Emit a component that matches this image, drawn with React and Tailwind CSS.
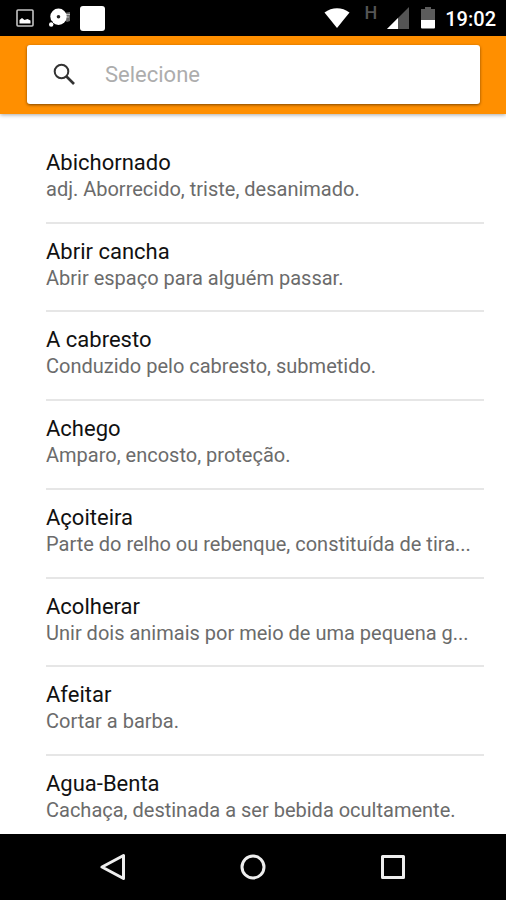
const entries = [
  ["Abichornado", "adj. Aborrecido, triste, desanimado."],
  ["Abrir cancha", "Abrir espaço para alguém passar."],
  ["A cabresto", "Conduzido pelo cabresto, submetido."],
  ["Achego", "Amparo, encosto, proteção."],
  ["Açoiteira", "Parte do relho ou rebenque, constituída de tira..."],
  ["Acolherar", "Unir dois animais por meio de uma pequena g..."],
  ["Afeitar", "Cortar a barba."],
  ["Agua-Benta", "Cachaça, destinada a ser bebida ocultamente."],
];

function StatusBar() {
  return (
    <div className="flex h-9 items-center justify-between bg-black pr-2.5 pl-4 text-white">
      <div className="flex items-center">
        <svg className="h-[18px] w-[18px]" viewBox="0 0 18 18" aria-hidden="true">
          <rect x="1" y="1" width="16" height="16" rx="1" fill="none" stroke="#c4c4c4" strokeWidth="1.6" />
          <path d="M3.500 14.500V11L6 9l2.500 2 3-1 3 1.500v3z" fill="#fff" />
        </svg>
        <svg className="ml-3.5 h-5 w-6" viewBox="0 0 24 20" aria-hidden="true">
          <path d="M16 5l6-1v9l-3 1-3-2z" fill="#666" />
          <path d="M18 6.500h4M18 9h3" stroke="#bbb" strokeWidth="1" />
          <circle cx="10.500" cy="8.700" r="8.200" fill="#fff" />
          <circle cx="3.200" cy="16.500" r="2.200" fill="#fff" />
          <path d="M2 12l3 2.500" stroke="#000" strokeWidth="1" />
          <circle cx="10.500" cy="8.700" r="1.800" fill="#222" />
        </svg>
        <span className="ml-2 h-[25px] w-[25px] rounded-[3px] bg-white" />
      </div>
      <div className="flex items-center">
        <svg className="h-5 w-[26px]" viewBox="0 0 26 20" aria-hidden="true">
          <path d="M.5 4.500C8-1.200 18-1.200 25.500 4.500L13 20z" fill="#fff" />
        </svg>
        <span className="mr-2.5 ml-3.5 pb-2.5 text-lg leading-5 font-medium text-[#555]">H</span>
        <svg className="h-[22px] w-[22px]" viewBox="0 0 22 22" aria-hidden="true">
          <path d="M22 0v22H0z" fill="#555" />
          <path d="M11 11v11H0z" fill="#fff" />
        </svg>
        <svg className="mr-2.5 ml-3 h-[22px] w-3.5" viewBox="0 0 14 22" aria-hidden="true">
          <path d="M4 0h6v2h4v11H0V2h4z" fill="#5c5c5c" />
          <path d="M0 13h14v7.500q0 1-1 1H1q-1 0-1-1z" fill="#fff" />
        </svg>
        <time className="pt-0.5 text-xl leading-5 font-medium">19:02</time>
      </div>
    </div>
  );
}

function SearchBar() {
  return (
    <header className="relative bg-[#ff8f00] pt-[9px] pr-[26px] pb-2.5 pl-[27px] shadow-[0_1px_4px_rgba(0,0,0,0.35)]">
      <div className="flex h-[59px] items-center rounded-[3px] bg-white pl-[26px] shadow-[0_1px_3px_rgba(0,0,0,0.5)]">
        <label htmlFor="search" aria-label="Pesquisar">
          <svg className="h-[23px] w-[23px]" viewBox="0 0 23 23" fill="none" stroke="#333" aria-hidden="true">
            <circle cx="8.500" cy="8.500" r="6.800" strokeWidth="2" />
            <path d="M13.500 13.500l7.500 7.500" strokeWidth="2.600" />
          </svg>
        </label>
        <input
          id="search"
          type="text"
          placeholder="Selecione"
          className="ml-[29px] min-w-0 flex-1 bg-transparent text-[22px] leading-7 text-black outline-none placeholder:text-[#adadad]"
        />
      </div>
    </header>
  );
}

export default function App() {
  return (
    <div className="flex min-h-screen flex-col bg-white font-['Roboto',sans-serif]">
      <StatusBar />
      <SearchBar />
      <main className="flex flex-1 flex-col pt-[21px] pr-[22px] pl-[46px]">
        <ul className="flex flex-1 flex-col">
          {entries.map(([term, meaning]) => (
            <li
              key={term}
              className="flex-1 border-b-2 border-[#e6e6e6] pt-[15px] last:h-[78px] last:flex-none last:border-0"
            >
              <h2 className="text-[22px] leading-[26px] text-[#111]">{term}</h2>
              <p className="truncate text-xl leading-[26px] text-[#6b6b6b]">{meaning}</p>
            </li>
          ))}
        </ul>
      </main>
      <nav className="flex h-[66px] items-center justify-center gap-[114px] bg-black">
        <button type="button" aria-label="Voltar">
          <svg className="h-7 w-[26px]" viewBox="0 0 26 28" fill="none" stroke="#eee" strokeWidth="3" strokeLinejoin="round" aria-hidden="true">
            <path d="M23.500 2.500v23L2 14z" />
          </svg>
        </button>
        <button type="button" aria-label="Início">
          <svg className="h-[26px] w-[26px]" viewBox="0 0 26 26" fill="none" stroke="#eee" strokeWidth="3" aria-hidden="true">
            <circle cx="13" cy="13" r="11" />
          </svg>
        </button>
        <button type="button" aria-label="Recentes">
          <svg className="h-[26px] w-[26px]" viewBox="0 0 26 26" fill="none" stroke="#eee" strokeWidth="3" strokeLinejoin="round" aria-hidden="true">
            <rect x="2.500" y="2.500" width="21" height="21" />
          </svg>
        </button>
      </nav>
    </div>
  );
}
